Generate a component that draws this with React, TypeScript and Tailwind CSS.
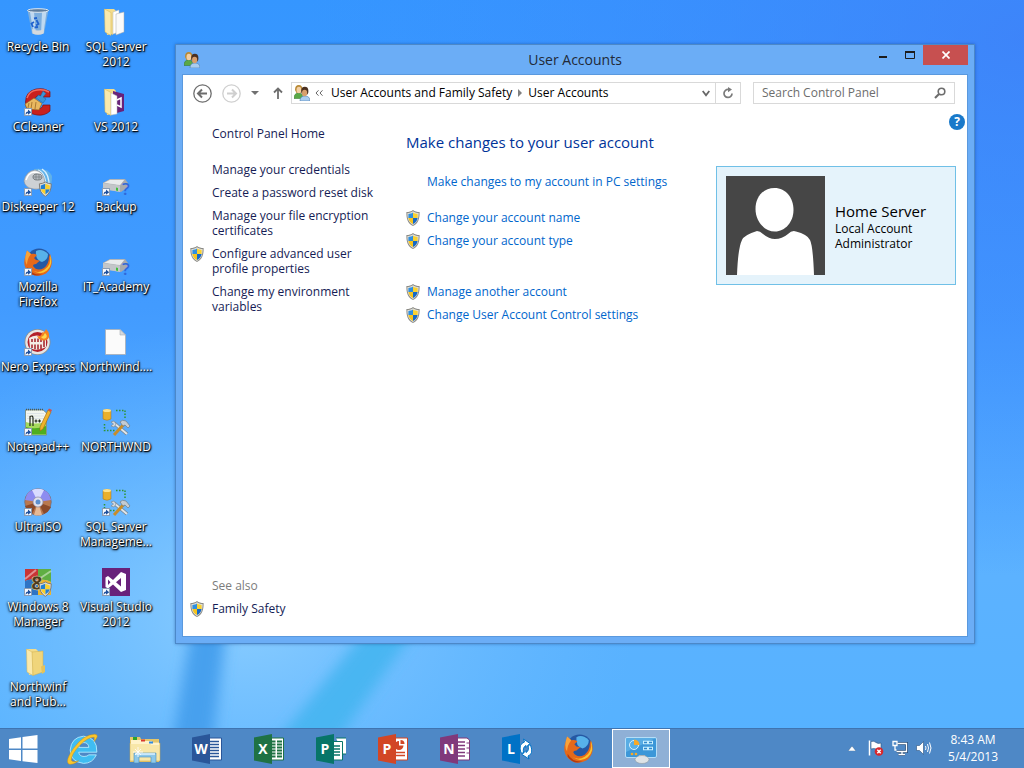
import type { ReactNode } from "react";

function Shield({ className = "" }: { className?: string }) {
    return (
        <svg viewBox="0 0 14 16" className={`h-4 w-3.5 shrink-0 ${className}`} aria-hidden="true">
            <path d="M7 0C5.200 1.400 3 2 .4 2C.2 8.500 1.600 13.400 7 16C12.400 13.400 13.800 8.500 13.600 2C11 2 8.800 1.400 7 0Z" fill="#8b8b86" />
            <path d="M7 1.200C5.300 2.400 3.500 2.900 1.400 3C1.300 8.500 2.500 12.600 7 14.900C11.500 12.600 12.700 8.500 12.600 3C10.500 2.900 8.700 2.400 7 1.200Z" fill="#e4e2da" />
            <path d="M7 2.400C5.500 3.400 4 3.800 2.400 3.900V8H7Z" fill="#2f8fe0" />
            <path d="M7 2.400C8.500 3.400 10 3.800 11.600 3.900V8H7Z" fill="#fbd22f" />
            <path d="M2.400 8C2.900 10.900 4.300 12.700 7 13.900V8Z" fill="#f6c41d" />
            <path d="M11.600 8C11.100 10.900 9.700 12.700 7 13.900V8Z" fill="#1569c7" />
        </svg>
    );
}

function ShortcutArrow() {
    return (
        <g>
            <rect x="0.500" y="20.500" width="7" height="7" fill="#f4f8ff" stroke="#8a9db5" />
            <path d="M1.500 27C1.500 24.500 2.600 23.500 4 23.500V21.500L7.200 24.200L4 26.800V25.200C3 25.200 2.300 25.800 1.500 27Z" fill="#1d4f9c" />
        </g>
    );
}

function Pic({ children, shortcut = false }: { children: ReactNode; shortcut?: boolean }) {
    return (
        <svg viewBox="0 0 28 28" className="h-7 w-7 shrink-0 overflow-visible" aria-hidden="true">
            {children}
            {shortcut && <ShortcutArrow />}
        </svg>
    );
}

function RecycleBin() {
    return (
        <Pic>
            <path d="M3.500 2L8 25.500Q14 28 20 25.500L24.500 2Z" fill="#8fb4d6" fillOpacity=".8" />
            <path d="M6 4L9.500 25L12 26L10 4ZM18 4L17 26L19.500 25L22.500 4Z" fill="#e3effa" fillOpacity=".65" />
            <ellipse cx="14" cy="2.500" rx="10.500" ry="1.800" fill="#5f7d9c" stroke="#dfe9f2" />
            <path d="M8 21L8.500 25.500Q14 28 19.500 25.500L20 21Q14 24 8 21Z" fill="#d5dade" />
            <path d="M10 10.500L13 10M12.500 12L14.500 16L12 17.500M9 19L7.500 15.500L10 14M14 19L10.500 19.500" fill="none" stroke="#1f62cf" strokeWidth="1.800" />
        </Pic>
    );
}

function OpenFolder({ tone = "docs" }: { tone?: string }) {
    return (
        <Pic>
            <path d="M3 1L11 4V27L3 23Z" fill="#e9c965" />
            <path d="M2.500 1H12L14 3V25L5 27Z" fill="#f3dc8c" />
            <path d="M2.500 1L9 4.500V27.500L3 24Z" fill="#fae9ac" stroke="#d6b552" strokeWidth=".5" />
            {tone === "docs" && <path d="M11 4L17 2V24L11 26Z" fill="#fff" stroke="#b8b8b8" strokeWidth=".5" />}
            {tone === "docs" && <path d="M14 6L22 4V24L14 27Z" fill="#fafafa" stroke="#a9a9a9" strokeWidth=".5" />}
            {tone === "vs" && <path d="M11 3L22 6V23L11 26Z" fill="#68217a" />}
            {tone === "vs" && <path d="M9 5L15 8V26L9 27Z" fill="#fff" stroke="#b8b8b8" strokeWidth=".5" />}
            {tone === "vs" && <path d="M15 12L19 10V19L15 17" fill="none" stroke="#fff" strokeWidth="1.500" />}
            {tone === "plain" && <path d="M8 4L19 3V24L9 27.500Z" fill="#f0d57b" stroke="#cfae4d" strokeWidth=".5" />}
            {tone === "plain" && <path d="M17 18.500L21 17V24L18 26Z" fill="#e5c35a" />}
        </Pic>
    );
}

function CCleaner() {
    return (
        <Pic shortcut>
            <path d="M26 9V3.500Q20 -.5 12 1Q1.500 3.500 1.500 14Q2 26 13 27Q21 28 26 23V17H19Q18 21 14 20.500Q10 19 10 14Q10.500 8 15 7.500Q18 7 19 9Z" fill="#c9201d" stroke="#7e0e10" strokeWidth=".7" />
            <path d="M3 10Q5 3 13 2Q20 1 25 4" fill="none" stroke="#ef6d61" strokeWidth="1.500" />
            <path d="M19 3L22 5.500L19 9L22 11L19 15L12 10L14.500 7L16.500 8Z" fill="#3a95d7" stroke="#1c5f98" strokeWidth=".5" />
            <path d="M10 10L18 15.500L15 22L3 21L1 16Z" fill="#e8b860" stroke="#8a5a1c" strokeWidth=".6" />
            <path d="M5 15L4 20M8 14L7 21M12 14L11 21" stroke="#9a6a26" strokeWidth=".8" />
        </Pic>
    );
}

function SmallShield() {
    return (
        <g transform="translate(15 14) scale(.9)">
            <path d="M7 0Q4 2 .4 2Q.2 12 7 16Q13.800 12 13.600 2Q10 2 7 0Z" fill="#dddcd6" stroke="#77756e" />
            <path d="M7 2L2 4V8H7ZM12 8Q11 12 7 14V8Z" fill="#217fd4" />
            <path d="M7 2L12 4V8H7ZM2 8Q3 12 7 14V8Z" fill="#fbd02a" />
        </g>
    );
}

function Diskeeper() {
    return (
        <Pic shortcut>
            <path d="M10 1Q24 -1 28 8Q28 18 24 22L12 19Z" fill="#62b2e8" />
            <path d="M14 2Q22 5 22 20M18 1Q26 6 25 20" fill="none" stroke="#d8f0ff" strokeWidth="1.300" />
            <path d="M0 13Q2 3 11 2Q20 3 21 15Q19 22 10 21Q1 20 0 13Z" fill="#cdd1d5" stroke="#8f969c" strokeWidth=".6" />
            <path d="M2 12Q4 5 10 4Q16 4 18 9" fill="none" stroke="#fff" strokeWidth="1.500" />
            <ellipse cx="13.500" cy="9" rx="4.500" ry="3" fill="#b4babf" stroke="#5c6266" strokeWidth=".8" />
            <path d="M10 9H17M12 6.500V11.500M15 6.500V11.500" stroke="#6c7276" strokeWidth=".6" />
            <SmallShield />
        </Pic>
    );
}

function Drive() {
    return (
        <Pic shortcut>
            <path d="M1 15L8 11H23L26 15V19L19 24L1 21Z" fill="#a7abae" />
            <path d="M1 15L8 11.500H23L18 17.500Z" fill="#e9ebec" stroke="#909599" strokeWidth=".4" />
            <path d="M1 15L18 17.500V24L1 21Z" fill="#c3c6c9" />
            <path d="M14 19.500L16 20V23L14 22.500Z" fill="#3fc13c" />
            <text x="20" y="27" className="fill-[#2f68d8] font-['Open_Sans',sans-serif] text-[17px] font-semibold">?</text>
        </Pic>
    );
}

function FirefoxShape() {
    return (
        <g>
            <circle cx="15" cy="13" r="12.500" fill="#2558a4" />
            <path d="M12 3Q18 0 24 6Q24 12 18 14Q11 12 12 3Z" fill="#57b2ea" />
            <path d="M26 6Q31 18 22 25.500Q12 31 4 23.500Q-2 17 1.500 8L3 2.500L7 6Q10 5 13 7L10 10L12 12L16 12.500L12 16Q9 16 9 18Q13 24 20 20Q25 16 25 9Z" fill="#e5691a" />
            <path d="M26 6.500Q28 17 20 22Q14 26 8 22Q16 28 23 22.500Q30 16 26 6.500Z" fill="#fbc530" />
            <path d="M3 2.500L7 6Q3 11 3 17Q-.5 12 3 2.500Z" fill="#f9a339" />
            <path d="M3.500 19Q8 27.500 18 26.500Q9 30 3.500 22Z" fill="#b33a10" />
        </g>
    );
}

function Nero() {
    return (
        <Pic shortcut>
            <circle cx="13.500" cy="14" r="13" fill="#8f8f8f" />
            <circle cx="13.500" cy="14" r="12.200" fill="#e6e5e4" />
            <circle cx="13.500" cy="14" r="10" fill="#b3202a" />
            <path d="M5 10Q12 5 22 10V19Q13 24 6 20Z" fill="#f3ece6" />
            <path d="M8 11V14M11 10.500V14M14 10.500V14M17 10.500V14M8 16.500V20M11 16.500V21M14 16.500V21.500M17 16.500V21M20 12V19" stroke="#a31d27" strokeWidth="1.500" />
            <path d="M13 8Q18 9 18 4Q20 6 22 1Q27 6 24 11Q20 14 15 11Z" fill="#f58220" />
            <path d="M17 9Q20 8 21 5Q24 8 22 10Q19 12 17 9Z" fill="#ffd94b" />
        </Pic>
    );
}

function BlankFile() {
    return (
        <Pic>
            <path d="M3.500 1.500H18L23.500 7V26.500H3.500Z" fill="#fbfbfb" stroke="#a9afb5" strokeWidth=".8" />
            <path d="M18 1.500V7H23.500Z" fill="#d5d9dd" stroke="#a9afb5" strokeWidth=".6" />
        </Pic>
    );
}

function NotepadPlus() {
    return (
        <Pic shortcut>
            <path d="M1.500 2H19L22.500 5V27H1.500Z" fill="#f2f6ef" stroke="#6f7d64" strokeWidth=".7" />
            <path d="M2 14Q10 17 22 14V26.500H2Z" fill="#a5d95c" />
            <path d="M2 19Q12 22 22 18V26.500H2Z" fill="#4fae20" />
            <path d="M3 5.500H20M3 8H20M3 10.500H20" stroke="#cfd8e0" strokeWidth=".6" />
            <path d="M2 1.500H19" stroke="#4e5a55" strokeWidth="1.500" strokeDasharray="1 1" />
            <path d="M6 18V8.500Q9 7 9 10V18M10.500 13H13.500M12 11.500V14.500M14 13H17M15.500 11.500V14.500" fill="none" stroke="#242a1c" strokeWidth="1.200" />
            <path d="M24 2L27 4L19 21L16 23L16 19Z" fill="#efb32c" stroke="#a06512" strokeWidth=".6" />
            <path d="M24 2L25 .5L28 2L27 4Z" fill="#d5514a" />
        </Pic>
    );
}

function SqlTools({ shortcut = false }: { shortcut?: boolean }) {
    return (
        <Pic shortcut={shortcut}>
            <path d="M14 2.500H23V11M2.500 16V22.500H13" fill="none" stroke="#2f9434" strokeWidth="1.500" strokeDasharray="1.500 1.500" />
            <path d="M1 2.500Q5 0 9 2.500V11Q5 13.500 1 11Z" fill="#eab02c" stroke="#a87310" strokeWidth=".5" />
            <ellipse cx="5" cy="2.500" rx="4" ry="1.500" fill="#ffe28a" />
            <path d="M12 15L25 26" stroke="#77828c" strokeWidth="3.500" />
            <path d="M12 15L25 26" stroke="#dfe5ea" strokeWidth="2" />
            <path d="M9 14L12 13L14 16L12 19L9 18L11.500 16Z" fill="#d5dce2" stroke="#77828c" strokeWidth=".6" />
            <path d="M22 16L12 27" stroke="#c78d2a" strokeWidth="3" />
            <path d="M18 14Q20 11 24 13L28 18L26 20L23 17L21 18Z" fill="#c4ccd3" stroke="#66717b" strokeWidth=".6" />
        </Pic>
    );
}

function Disc() {
    return (
        <Pic shortcut>
            <circle cx="14" cy="14" r="13.300" fill="#b9784f" stroke="#6a6a80" strokeWidth=".7" />
            <path d="M14 14L1 12Q3 1 14 1Q25 1 27 12Z" fill="#8d8cf0" />
            <path d="M14 14L8 2Q14 -.5 20 2Z" fill="#d9dcff" />
            <path d="M14 14L1 18Q4 24 8 26ZM14 14L27 19Q25 24 20 26Z" fill="#8c4a2a" />
            <path d="M14 14L10 27Q14 28 18 27Z" fill="#e6b995" />
            <circle cx="14" cy="14" r="5" fill="#e2e2ee" stroke="#8a8aa0" strokeWidth=".7" />
            <circle cx="14" cy="14" r="2.500" fill="#5b8fd0" />
        </Pic>
    );
}

function WinManager() {
    return (
        <Pic shortcut>
            <path d="M1 1H14V13Q7 10 1 13Z" fill="#c93434" />
            <path d="M14 1H27V14Q20 10 14 13Z" fill="#5fae43" />
            <path d="M1 13Q7 10 14 13V27H1Z" fill="#2f74c4" />
            <path d="M14 13Q20 10 27 14V27H14Z" fill="#eeb52c" />
            <path d="M1 11L12 2M15 11L27 3" stroke="#fff" strokeOpacity=".45" strokeWidth="2" />
            <text x="7" y="22" stroke="#f3e6c0" strokeWidth=".5" className="fill-[#4b3a1e] font-['Open_Sans',sans-serif] text-[20px] font-extrabold">8</text>
            <SmallShield />
        </Pic>
    );
}

function VisualStudio() {
    return (
        <Pic shortcut>
            <rect width="28" height="28" fill="#68217a" />
            <path fillRule="evenodd" d="M19 4L24 6V22L19 24L11 16.500L6 20.500L3.500 19V9.500L6 8L11 12ZM19 10L14 14.200L19 18.500ZM6 11.500V17L8.500 14.200Z" fill="#fff" />
        </Pic>
    );
}

function DesktopItem({ icon, lines }: { icon: ReactNode; lines: string[] }) {
    return (
        <li>
            <button type="button" className="flex h-20 w-19 flex-col items-center gap-[3px] pt-2 text-xs leading-[15px] text-white">
                {icon}
                <span className="flex flex-col whitespace-nowrap [text-shadow:1px_1px_1px_#000,0_1px_3px_#000,0_0_2px_#000]">
                    {lines.map((line) => (
                        <span key={line}>{line}</span>
                    ))}
                </span>
            </button>
        </li>
    );
}

const firstColumn = [
    { icon: <RecycleBin />, lines: ["Recycle Bin"] },
    { icon: <CCleaner />, lines: ["CCleaner"] },
    { icon: <Diskeeper />, lines: ["Diskeeper 12"] },
    { icon: <Pic shortcut><FirefoxShape /></Pic>, lines: ["Mozilla", "Firefox"] },
    { icon: <Nero />, lines: ["Nero Express"] },
    { icon: <NotepadPlus />, lines: ["Notepad++"] },
    { icon: <Disc />, lines: ["UltraISO"] },
    { icon: <WinManager />, lines: ["Windows 8", "Manager"] },
    { icon: <OpenFolder tone="plain" />, lines: ["Northwinf", "and Pub..."] },
];

const secondColumn = [
    { icon: <OpenFolder />, lines: ["SQL Server", "2012"] },
    { icon: <OpenFolder tone="vs" />, lines: ["VS 2012"] },
    { icon: <Drive />, lines: ["Backup"] },
    { icon: <Drive />, lines: ["IT_Academy"] },
    { icon: <BlankFile />, lines: ["Northwind...."] },
    { icon: <SqlTools />, lines: ["NORTHWND"] },
    { icon: <SqlTools shortcut />, lines: ["SQL Server", "Manageme..."] },
    { icon: <VisualStudio />, lines: ["Visual Studio", "2012"] },
];

function UsersIcon() {
    return (
        <svg viewBox="0 0 16 16" className="h-4 w-4 shrink-0" aria-hidden="true">
            <path d="M0 13.500Q0 8 4.500 8Q9 8 9 13.500Z" fill="#5aa845" stroke="#2f7328" strokeWidth=".5" />
            <path d="M1 5Q1 0 4.800 0Q8.500 0 8.500 5L7 8H2.500Z" fill="#b98a35" />
            <ellipse cx="4.900" cy="5" rx="2.400" ry="3.200" fill="#f3cfa4" />
            <path d="M6 16Q6 11 11 11Q16 11 16 16Z" fill="#a9cdf0" stroke="#4f7eb2" strokeWidth=".6" />
            <ellipse cx="10.800" cy="6" rx="3.600" ry="4.300" fill="#4b3020" />
            <ellipse cx="10.600" cy="8" rx="2.600" ry="3.300" fill="#d99f6c" />
        </svg>
    );
}

function WindowTitle() {
    return (
        <header className="flex h-[29px] items-start">
            <div className="min-w-0 flex-1">
                <div className="pt-[7px] pl-0.5">
                    <UsersIcon />
                </div>
            </div>
            <h1 className="pt-1 text-[14px] leading-[22px] text-[#222a38]">User Accounts</h1>
            <div className="flex min-w-0 flex-1 justify-end">
                <button type="button" aria-label="Minimize" className="flex h-5 w-[27px] items-center justify-center">
                    <svg viewBox="0 0 8 10" className="h-2.5 w-2"><path d="M0 7H8" stroke="#1c1c1c" strokeWidth="2" /></svg>
                </button>
                <button type="button" aria-label="Maximize" className="flex h-5 w-[27px] items-center justify-center">
                    <svg viewBox="0 0 10 8" className="h-2 w-2.5"><path d="M.5 1V7.500H9.500V1" fill="none" stroke="#1c1c1c" /><path d="M0 1H10" stroke="#1c1c1c" strokeWidth="2" /></svg>
                </button>
                <button type="button" aria-label="Close" className="flex h-5 w-[45px] items-center justify-center bg-[#c75050]">
                    <svg viewBox="0 0 8 8" className="h-2 w-2"><path d="M.5 .5L7.500 7.500M7.500 .5L.5 7.500" stroke="#fff" strokeWidth="1.700" /></svg>
                </button>
            </div>
        </header>
    );
}

function NavBar() {
    return (
        <div className="flex h-[22px] items-center pr-3 pl-2.5">
            <button type="button" aria-label="Back" className="mr-2.5 shrink-0">
                <svg viewBox="0 0 19 19" className="h-[19px] w-[19px]" fill="none" stroke="#6d6d6d">
                    <circle cx="9.500" cy="9.500" r="8.700" strokeWidth="1.300" />
                    <path d="M14 9.500H5.500M9 5.500L5 9.500L9 13.500" strokeWidth="2" />
                </svg>
            </button>
            <button type="button" aria-label="Forward" className="mr-2.5 shrink-0">
                <svg viewBox="0 0 19 19" className="h-[19px] w-[19px]" fill="none" stroke="#cfcfcf">
                    <circle cx="9.500" cy="9.500" r="8.700" strokeWidth="1.300" />
                    <path d="M5 9.500H13.500M10 5.500L14 9.500L10 13.500" strokeWidth="2" />
                </svg>
            </button>
            <button type="button" aria-label="Recent locations" className="mr-3.5 shrink-0">
                <svg viewBox="0 0 8 4" className="h-1 w-2"><path d="M0 0H8L4 4Z" fill="#707070" /></svg>
            </button>
            <button type="button" aria-label="Up" className="mr-2 shrink-0">
                <svg viewBox="0 0 10 12" className="h-3 w-2.5" fill="none" stroke="#6d6d6d" strokeWidth="1.800"><path d="M5 12V1.500M1 5.500L5 1.500L9 5.500" /></svg>
            </button>
            <nav aria-label="Address" className="flex h-[22px] min-w-0 flex-1 items-center border border-[#d9d9d9] pl-0.5 text-xs text-black">
                <UsersIcon />
                <button type="button" aria-label="Show parent folders" className="mr-2 ml-[5px]">
                    <svg viewBox="0 0 8 6" className="h-1.5 w-2" fill="none" stroke="#666"><path d="M3.500 .3L1 3L3.500 5.700M7.500 .3L5 3L7.500 5.700" /></svg>
                </button>
                <button type="button" className="whitespace-nowrap">User Accounts and Family Safety</button>
                <svg viewBox="0 0 4 8" className="mx-1.5 h-2 w-1 shrink-0" aria-hidden="true"><path d="M0 0L4 4L0 8Z" fill="#808080" /></svg>
                <button type="button" className="whitespace-nowrap">User Accounts</button>
                <button type="button" aria-label="Previous locations" className="mr-[5px] ml-auto">
                    <svg viewBox="0 0 8 7" className="h-[7px] w-2" fill="none" stroke="#666" strokeWidth="1.800"><path d="M.7 1L4 5.300L7.300 1" /></svg>
                </button>
                <button type="button" aria-label="Refresh" className="flex h-5 w-[25px] shrink-0 items-center justify-center border-l border-[#d9d9d9]">
                    <svg viewBox="0 0 12 12" className="h-3 w-3" fill="none" stroke="#7a7a7a" strokeWidth="1.700">
                        <path d="M6.500 2.500A4 4 0 1 0 10 6.500" />
                        <path d="M6 0L10 2.500L6 5.200Z" fill="#7a7a7a" stroke="none" />
                    </svg>
                </button>
            </nav>
            <label className="ml-3 flex h-[22px] w-[202px] items-center border border-[#d9d9d9] pr-2 pl-2">
                <input type="search" aria-label="Search Control Panel" placeholder="Search Control Panel" className="min-w-0 flex-1 text-xs outline-none placeholder:text-[#6d6d6d]" />
                <svg viewBox="0 0 12 12" className="h-3 w-3 shrink-0" fill="none" stroke="#6d6d6d" strokeWidth="1.600" aria-hidden="true">
                    <circle cx="7.500" cy="4.500" r="3.300" />
                    <path d="M5 7L1 11" strokeWidth="2.200" />
                </svg>
            </label>
        </div>
    );
}

function SideLink({ shield = false, children }: { shield?: boolean; children: ReactNode }) {
    return (
        <li className="flex h-auto gap-2">
            {shield ? <Shield className="-mb-px" /> : <span className="w-3.5 shrink-0" />}
            <a href="#">{children}</a>
        </li>
    );
}

function Sidebar() {
    return (
        <aside className="flex w-[223px] shrink-0 flex-col justify-between pt-[22px] pb-5 pl-[7px] text-xs leading-[15px] text-[#151c55]">
            <ul className="flex flex-col gap-2">
                <li className="mb-[13px] pl-[22px]"><a href="#">Control Panel Home</a></li>
                <SideLink>Manage your credentials</SideLink>
                <SideLink>Create a password reset disk</SideLink>
                <SideLink>Manage your file encryption<br />certificates</SideLink>
                <SideLink shield>Configure advanced user<br />profile properties</SideLink>
                <SideLink>Change my environment<br />variables</SideLink>
            </ul>
            <div>
                <h2 className="mb-2 pl-[22px] text-[#7c7c7c]">See also</h2>
                <ul><SideLink shield>Family Safety</SideLink></ul>
            </div>
        </aside>
    );
}

function Task({ shield = true, children }: { shield?: boolean; children: ReactNode }) {
    return (
        <li className="flex h-[15px] items-center gap-[7px]">
            {shield ? <Shield /> : <span className="w-3.5" />}
            <a href="#">{children}</a>
        </li>
    );
}

function AccountCard() {
    return (
        <section className="mt-3 mr-[9px] flex h-[119px] w-60 shrink-0 items-center gap-2.5 border border-[#70c0e7] bg-[#e5f3fb] pl-[9px]">
            <svg viewBox="0 0 99 99" className="h-[99px] w-[99px]" role="img" aria-label="Account picture">
                <rect width="99" height="99" fill="#464646" />
                <path d="M48.500 12C60 12 67.500 22 67.500 34C67.500 46 59 55.500 49 55.500C38 55.500 29.500 45 29.500 33C29.500 21 37 12 48.500 12Z" fill="#fff" />
                <path d="M11 99Q12 72 16 64Q18 59 31 55Q34 55 37 58Q43 63 49 63Q56 63 62 58Q66 54 70 55.500Q81 58 84 64Q87 70 88 99Z" fill="#fff" />
            </svg>
            <div className="text-xs leading-[15px] text-black">
                <h3 className="text-[15px] leading-5">Home Server</h3>
                <p>Local Account</p>
                <p>Administrator</p>
            </div>
        </section>
    );
}

function AccountsWindow() {
    return (
        <section className="mt-11 mr-[49px] mb-[84px] ml-[21px] flex min-w-0 flex-1 flex-col border border-[#4c88c8] bg-[#6badf6] px-1.5 pb-1.5 shadow-[0_0_3px_rgba(0,40,110,0.4)]">
            <WindowTitle />
            <div className="flex flex-1 flex-col border border-[#5a99de] bg-white pt-[7px]">
                <NavBar />
                <div className="flex flex-1">
                    <Sidebar />
                    <main className="flex min-w-0 flex-1 flex-col pt-2.5 pr-0.5">
                        <div className="flex items-start justify-between">
                            <h2 className="pt-4 text-[15px] leading-6 text-[#003399]">Make changes to your user account</h2>
                            <button type="button" aria-label="Help" className="flex h-4 w-4 items-center justify-center rounded-full bg-[#1979ca] text-[12px] leading-4 font-bold text-white">?</button>
                        </div>
                        <div className="flex justify-between">
                            <ul className="flex flex-col gap-2 pt-5 text-xs leading-[15px] whitespace-nowrap text-[#0066cc]">
                                <Task shield={false}>Make changes to my account in PC settings</Task>
                                <li className="h-[5px]" aria-hidden="true" />
                                <Task>Change your account name</Task>
                                <Task>Change your account type</Task>
                                <li className="h-5" aria-hidden="true" />
                                <Task>Manage another account</Task>
                                <Task>Change User Account Control settings</Task>
                            </ul>
                            <AccountCard />
                        </div>
                    </main>
                </div>
            </div>
        </section>
    );
}

function OfficeIcon({ letter, color, children }: { letter: string; color: string; children: ReactNode }) {
    return (
        <svg viewBox="0 0 30 30" className="h-[30px] w-[30px]" aria-hidden="true">
            {children}
            <path d="M0 3.500L18 0V30L0 26.500Z" fill={color} />
            <text x="9" y="20" textAnchor="middle" className="fill-white font-['Open_Sans',sans-serif] text-[14px] font-bold">{letter}</text>
        </svg>
    );
}

function IeIcon() {
    return (
        <svg viewBox="0 0 30 30" className="h-8 w-8" aria-hidden="true">
            <path fillRule="evenodd" d="M15.500 3Q28.500 4 28 18H11Q11.500 22 16 22Q19 22 20.500 20.500H27.500Q24 28.500 15.500 28.500Q3 27 3 16Q4 4 15.500 3ZM11 13.500H20.500Q20 9 15.800 9Q11.500 9 11 13.500Z" fill="#3fbdf2" stroke="#b9ecff" strokeWidth=".8" />
            <path d="M25.500 8Q31 1.500 26 1.200Q16 1 6 14.500Q-2 26 1.500 29Q5 30.500 11 26Q5 28 4 25.500Q4 20 12 11.500Q20 3.500 25.500 4Z" fill="#fbc62b" stroke="#c88d10" strokeWidth=".4" />
        </svg>
    );
}

function ExplorerIcon() {
    return (
        <svg viewBox="0 0 32 30" className="h-[30px] w-8" aria-hidden="true">
            <path d="M1 3H11L12 5H30V28H1Z" fill="#e5c66a" />
            <path d="M1 9H31V27H1Z" fill="#f8e7a8" stroke="#c9a748" strokeWidth=".5" />
            <path d="M2 6H15V10H2ZM14 7H23V10H14ZM22 8.500H30V11H22Z" fill="#fff3c9" />
            <path d="M4 3H8V6H4Z" fill="#2ca32c" />
            <path d="M12 5.500H16V7.500H12Z" fill="#d9382f" />
            <path d="M20 7.500H24V9.500H20Z" fill="#2f8ae0" />
            <path d="M5 29V19H27V29H22V23H10V29Z" fill="#8cc8ea" stroke="#4a8ebb" strokeWidth=".6" />
            <path d="M6 20H26" stroke="#dff3ff" strokeWidth="1.500" />
            <path d="M9 13V23M4 18H14M6 15L12 21M12 15L6 21" stroke="#fff" strokeWidth=".8" />
        </svg>
    );
}

function ControlPanelIcon() {
    return (
        <svg viewBox="0 0 32 30" className="h-[30px] w-8" aria-hidden="true">
            <rect x=".5" y="3.500" width="31" height="20" rx="1.500" fill="#3c97d8" stroke="#b5def8" />
            <path d="M1 4H31L1 18Z" fill="#6dbcec" fillOpacity=".6" />
            <circle cx="9" cy="11" r="4.500" fill="#58b0e6" stroke="#d8effc" />
            <path d="M9 11V5.500A5.500 5.500 0 0 1 14.500 11Z" fill="#f7a928" />
            <path d="M18 8.500H28M18 14.500H28" stroke="#c9f0ff" strokeWidth="3.500" />
            <path d="M19 8.500H22M24 8.500H27M19 14.500H22M24 14.500H27" stroke="#2f86cc" strokeWidth="1.500" />
            <circle cx="7" cy="20" r="1.300" fill="#f7a928" />
            <circle cx="11" cy="20" r="1.300" fill="#f7a928" />
            <path d="M13 24L14 21H20L21 24Z" fill="#b8bec3" />
            <ellipse cx="17" cy="25.500" rx="7" ry="4" fill="#dfe3e6" stroke="#8b9297" strokeWidth=".5" />
        </svg>
    );
}

const taskbarApps = [
    { name: "Internet Explorer", icon: <IeIcon /> },
    { name: "File Explorer", icon: <ExplorerIcon /> },
    {
        name: "Word",
        icon: (
            <OfficeIcon letter="W" color="#2a5699">
                <path d="M17 4H29.500V26H17Z" fill="#fff" stroke="#2a5699" />
                <path d="M17 7.500H27M17 10.500H27M17 13.500H27M17 16.500H27M17 19.500H27M17 22.500H27" stroke="#2a5699" strokeWidth="1.300" />
            </OfficeIcon>
        ),
    },
    {
        name: "Excel",
        icon: (
            <OfficeIcon letter="X" color="#1f7244">
                <path d="M17 4H29.500V26H17Z" fill="#fff" stroke="#1f7244" />
                <path d="M18 7.500H21.500M23 7.500H28M18 10.500H21.500M23 10.500H28M18 13.500H21.500M23 13.500H28M18 16.500H21.500M23 16.500H28M18 19.500H21.500M23 19.500H28M18 22.500H21.500M23 22.500H28" stroke="#1f7244" strokeWidth="2" />
            </OfficeIcon>
        ),
    },
    {
        name: "Publisher",
        icon: (
            <OfficeIcon letter="P" color="#077568">
                <path d="M20 4H30.500V20H27M17 7.500H26.500V26H17Z" fill="#fff" stroke="#077568" />
                <path d="M18 12H24M18 15H24M18 18H24M18 21H24" stroke="#077568" strokeWidth="1.300" />
            </OfficeIcon>
        ),
    },
    {
        name: "PowerPoint",
        icon: (
            <OfficeIcon letter="P" color="#d24625">
                <path d="M17 4H29.500V26H17Z" fill="#fff" stroke="#d24625" />
                <path d="M21 7A4.500 4.500 0 1 0 25.500 11.500H21Z" fill="#d24625" />
                <path d="M22.500 6V10H26.500A4 4 0 0 0 22.500 6Z" fill="#d24625" />
                <path d="M18 18.500H27M18 21.500H27" stroke="#d24625" strokeWidth="1.500" />
            </OfficeIcon>
        ),
    },
    {
        name: "OneNote",
        icon: (
            <OfficeIcon letter="N" color="#80397b">
                <path d="M17 4H27L29.500 6V26H17Z" fill="#fff" stroke="#80397b" />
                <path d="M17 8H25M17 11.500H25M17 15H25M17 18.500H25M17 22H25" stroke="#80397b" strokeWidth="1.500" />
                <path d="M26.500 9H29M26.500 14H29M26.500 19H29" stroke="#80397b" />
            </OfficeIcon>
        ),
    },
    {
        name: "Lync",
        icon: (
            <OfficeIcon letter="L" color="#0072c6">
                <path d="M19 19Q16 10 22.500 8L21.500 5L28 9.500L24 13.500V11.500Q20.500 13 21.500 19ZM28.500 11Q32 20 26 22L27 25L20 20.500L24 16.500V18.500Q27.500 17 26 11Z" fill="#fff" stroke="#0072c6" />
            </OfficeIcon>
        ),
    },
    { name: "Firefox", icon: <svg viewBox="-1 -1 31 31" className="h-8 w-8" aria-hidden="true"><FirefoxShape /></svg> },
    { name: "Control Panel", icon: <ControlPanelIcon />, active: true },
];

function Taskbar() {
    return (
        <footer className="flex h-10 shrink-0 items-stretch border-t border-[#3f74b0] bg-[#4e88c6]">
            <button type="button" aria-label="Start" className="flex w-[54px] items-center pl-[9px]">
                <svg viewBox="0 0 29 28" className="h-7 w-[29px]"><path d="M0 4L12 2.300V13.500H0ZM13.500 2L28.500 0V13.500H13.500ZM0 15H12V26L0 24.300ZM13.500 15H28.500V28L13.500 26.300Z" fill="#fff" /></svg>
            </button>
            <div className="flex gap-1">
                {taskbarApps.map((app) => (
                    <button
                        key={app.name}
                        type="button"
                        aria-label={app.name}
                        className={`flex w-[58px] items-center justify-center ${app.active ? "border border-white bg-[#8fb0d6]" : ""}`}
                    >
                        {app.icon}
                    </button>
                ))}
            </div>
            <div className="ml-auto flex items-center gap-2 pr-[26px] pb-px">
                <button type="button" aria-label="Show hidden icons" className="mr-1">
                    <svg viewBox="0 0 8 5" className="h-[5px] w-2"><path d="M0 5L4 0L8 5Z" fill="#fff" stroke="#2c5686" strokeWidth=".4" /></svg>
                </button>
                <button type="button" aria-label="Action Center">
                    <svg viewBox="0 0 16 16" className="h-4 w-4">
                        <path d="M1.500 .5V15.500" stroke="#fff" strokeWidth="1.500" />
                        <path d="M3 1.500Q6 .5 8 2.500Q10 4 13 3V10Q10 11 8 9Q6 8 3 9Z" fill="#fff" stroke="#28507e" strokeWidth=".6" />
                        <circle cx="11" cy="11.500" r="4.300" fill="#d8272c" />
                        <path d="M9.300 9.800L12.700 13.200M12.700 9.800L9.300 13.200" stroke="#fff" strokeWidth="1.400" />
                    </svg>
                </button>
                <button type="button" aria-label="Network">
                    <svg viewBox="0 0 16 16" className="h-4 w-4" fill="none">
                        <path d="M5.500 3.500H14.500V11.500H4.500M10 11.500V14M6.500 14.500H13" stroke="#28507e" strokeWidth="3" />
                        <path d="M5.500 3.500H14.500V11.500H4.500M10 11.500V14M6.500 14.500H13" stroke="#fff" strokeWidth="1.300" />
                        <path d="M1 1.500H5V5.500H1ZM3 5.500V10H4.500" stroke="#fff" strokeWidth="1.300" />
                    </svg>
                </button>
                <button type="button" aria-label="Volume">
                    <svg viewBox="0 0 16 16" className="h-4 w-4" fill="none">
                        <path d="M.5 5.500H3.500L7.500 1.500V14.500L3.500 10.500H.5Z" fill="#fff" stroke="#28507e" strokeWidth=".6" />
                        <path d="M9.500 6Q10.500 8 9.500 10M11.500 4Q13.500 8 11.500 12M13.500 2.500Q16.500 8 13.500 13.500" stroke="#fff" />
                    </svg>
                </button>
                <time className="ml-2 text-center text-xs leading-[17px] whitespace-nowrap text-white">
                    8:43 AM<br />5/4/2013
                </time>
            </div>
        </footer>
    );
}

function Wallpaper() {
    return (
        <svg viewBox="0 0 1024 768" preserveAspectRatio="none" className="absolute inset-0 -z-10 h-full w-full" aria-hidden="true">
            <defs>
                <linearGradient id="sky" x1="0" y1="0" x2="0" y2="1">
                    <stop offset="0" stopColor="#3596ff" />
                    <stop offset=".4" stopColor="#429bff" />
                    <stop offset=".75" stopColor="#5cb2ff" />
                    <stop offset="1" stopColor="#55b2ff" />
                </linearGradient>
                <radialGradient id="glow" cx=".24" cy=".8" r=".38">
                    <stop offset="0" stopColor="#8fd0ff" stopOpacity=".9" />
                    <stop offset="1" stopColor="#6fbcff" stopOpacity="0" />
                </radialGradient>
                <radialGradient id="dusk" cx="1" cy=".05" r=".7">
                    <stop offset="0" stopColor="#3f80f8" stopOpacity=".8" />
                    <stop offset="1" stopColor="#3f8cff" stopOpacity="0" />
                </radialGradient>
                <filter id="soft" x="-50%" y="-20%" width="200%" height="140%"><feGaussianBlur stdDeviation="7" /></filter>
            </defs>
            <rect width="1024" height="768" fill="url(#sky)" />
            <rect width="1024" height="768" fill="url(#glow)" />
            <rect width="1024" height="768" fill="url(#dusk)" />
            <g filter="url(#soft)">
                <path d="M196 600H230L208 780H166Z" fill="#46a0ee" />
                <path d="M390 600H436L310 780H246Z" fill="#48b6f2" />
            </g>
        </svg>
    );
}

export default function App() {
    return (
        <div className="relative isolate flex min-h-screen flex-col font-['Open_Sans','Noto_Sans',sans-serif]">
            <Wallpaper />
            <div className="flex flex-1">
                <ul>{firstColumn.map((item) => <DesktopItem key={item.lines[0]} {...item} />)}</ul>
                <ul className="ml-0.5">{secondColumn.map((item) => <DesktopItem key={item.lines[0]} {...item} />)}</ul>
                <AccountsWindow />
            </div>
            <Taskbar />
        </div>
    );
}
